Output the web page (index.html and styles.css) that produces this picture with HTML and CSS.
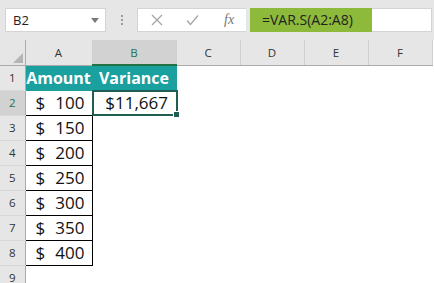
FILE: index.html
```html
<!DOCTYPE html>
<html lang="en">
<head>
    <meta charset="UTF-8">
    <title>VAR.S</title>
    <link rel="stylesheet" href="styles.css">
</head>
<body>
    <div class="toolbar">
        <div class="namebox">
            <span>B2</span>
            <svg class="arrow" width="8" height="5" viewBox="0 0 8 5"><path d="M0 0H8L4 5Z" fill="#7a7a7a"/></svg>
        </div>
        <div class="dots"><i></i><i></i><i></i></div>
        <div class="fbar">
            <div class="btns">
                <svg width="12" height="12" viewBox="0 0 12 12"><path d="M1 1L11 11M11 1L1 11" stroke="#a6a6a6" stroke-width="1.3" fill="none"/></svg>
                <svg width="13" height="12" viewBox="0 0 13 12"><path d="M1 6.5L4.5 10.5L12 1.5" stroke="#a6a6a6" stroke-width="1.3" fill="none"/></svg>
                <span class="fx">fx</span>
            </div>
            <div class="formula">=VAR.S(A2:A8)</div>
            <div class="rest"></div>
        </div>
    </div>

    <table class="sheet">
        <colgroup>
            <col class="c-rh"><col class="c-a"><col class="c-b"><col class="c-n"><col class="c-n"><col class="c-n"><col class="c-n">
        </colgroup>
        <tr class="colhead">
            <th class="corner"><span class="tri"></span></th>
            <th>A</th><th class="sel">B</th><th>C</th><th>D</th><th>E</th><th>F</th>
        </tr>
        <tr>
            <th class="rh">1</th>
            <td class="head">Amount</td><td class="head">Variance</td><td></td><td></td><td></td><td></td>
        </tr>
        <tr>
            <th class="rh sel">2</th>
            <td class="amt"><span>$</span><span>100</span></td>
            <td class="active">$11,667<div class="handle"></div></td><td></td><td></td><td></td><td></td>
        </tr>
        <tr>
            <th class="rh">3</th>
            <td class="amt"><span>$</span><span>150</span></td><td></td><td></td><td></td><td></td><td></td>
        </tr>
        <tr>
            <th class="rh">4</th>
            <td class="amt"><span>$</span><span>200</span></td><td></td><td></td><td></td><td></td><td></td>
        </tr>
        <tr>
            <th class="rh">5</th>
            <td class="amt"><span>$</span><span>250</span></td><td></td><td></td><td></td><td></td><td></td>
        </tr>
        <tr>
            <th class="rh">6</th>
            <td class="amt"><span>$</span><span>300</span></td><td></td><td></td><td></td><td></td><td></td>
        </tr>
        <tr>
            <th class="rh">7</th>
            <td class="amt"><span>$</span><span>350</span></td><td></td><td></td><td></td><td></td><td></td>
        </tr>
        <tr>
            <th class="rh">8</th>
            <td class="amt"><span>$</span><span>400</span></td><td></td><td></td><td></td><td></td><td></td>
        </tr>
        <tr class="last">
            <th class="rh">9</th>
            <td></td><td></td><td></td><td></td><td></td><td></td>
        </tr>
    </table>
</body>
</html>
```

FILE: styles.css
```css
body{
    margin: 0;
    width: 434px;
    height: 283px;
    overflow: hidden;
    background: #fff;
    font-family: "Open Sans", "Liberation Sans", sans-serif;
}

/* formula bar */
.toolbar{
    height: 40px;
    background: #e6e6e6;
    display: flex;
    align-items: flex-start;
    padding-top: 8px;
    box-sizing: border-box;
}
.namebox{
    margin-left: 5px;
    width: 101px;
    height: 24px;
    background: #fff;
    border: 1px solid #d4d4d4;
    box-sizing: border-box;
    display: flex;
    align-items: center;
    justify-content: space-between;
    padding: 0 6px 0 7px;
    font-size: 13px;
    color: #222;
}
.arrow{margin-top: 1px;}
.dots{
    width: 31px;
    height: 24px;
    display: flex;
    flex-direction: column;
    align-items: center;
    justify-content: center;
    gap: 2px;
}
.dots i{width: 2px; height: 2px; background: #9a9a9a; display: block;}
.fbar{
    display: flex;
    height: 24px;
}
.btns{
    width: 109px;
    background: #fff;
    border: 1px solid #d4d4d4;
    border-right: none;
    box-sizing: border-box;
    display: flex;
    align-items: center;
    padding-left: 13px;
    gap: 23px;
}
.fx{
    font-family: "Liberation Serif", serif;
    font-style: italic;
    font-size: 14px;
    color: #777;
    margin-left: 2px;
}
.formula{
    margin-left: 4px;
    width: 122px;
    background: #8dba3b;
    box-sizing: border-box;
    padding-left: 12px;
    font-size: 14px;
    line-height: 24px;
    color: #222;
}
.rest{
    width: 60px;
    background: #fff;
    border: 1px solid #d4d4d4;
    border-left: none;
    box-sizing: border-box;
}

/* grid */
.sheet{
    border-collapse: collapse;
    table-layout: fixed;
}
.c-rh{width: 25px;}
.c-a{width: 67px;}
.c-b{width: 84px;}
.c-n{width: 64px;}
.sheet th, .sheet td{padding: 0; overflow: visible; white-space: nowrap;}
.colhead th{
    height: 21px;
    background: #e6e6e6;
    border-right: 1px solid #d0d0d0;
    border-bottom: 1px solid #ababab;
    font-weight: normal;
    font-size: 11.5px;
    color: #333;
    padding-top: 1px;
}
.colhead th.sel{
    background: #d2d2d2;
    color: #217346;
    border-bottom: 2px solid #217346;
}
.corner{position: relative; border-right: 1px solid #ababab !important;}
.tri{
    position: absolute;
    right: 2px;
    bottom: 2px;
    width: 0;
    height: 0;
    border-left: 10px solid transparent;
    border-bottom: 10px solid #b4b4b4;
}
.sheet tr{height: 25px;}
.rh{
    background: #e6e6e6;
    border-right: 1px solid #ababab;
    border-bottom: 1px solid #d8d8d8;
    font-weight: normal;
    font-size: 11.5px;
    color: #333;
}
.rh.sel{background: #d2d2d2; color: #217346;}
.last .rh{vertical-align: top; padding-top: 4px;}
.head{
    background: #19a09f;
    color: #fff;
    font-weight: bold;
    font-size: 16px;
    text-align: center;
    border: 1px solid #19a09f;
}
.amt{
    border: 1px solid #000;
    font-size: 17px;
    color: #111;
}
.amt span:first-child{float: left; padding-left: 10px;}
.amt span:last-child{float: right; padding-right: 7px;}
.active{
    position: relative;
    font-size: 17px;
    color: #111;
    text-align: right;
    padding-right: 8px !important;
}
.active::after{
    content: "";
    position: absolute;
    left: -1px;
    top: -1px;
    right: -2px;
    bottom: -1px;
    border: 2px solid #1f5e50;
}
.handle{
    position: absolute;
    right: -4px;
    bottom: -3px;
    width: 5px;
    height: 5px;
    background: #1f5e50;
    border: 1px solid #fff;
    z-index: 2;
}
```
